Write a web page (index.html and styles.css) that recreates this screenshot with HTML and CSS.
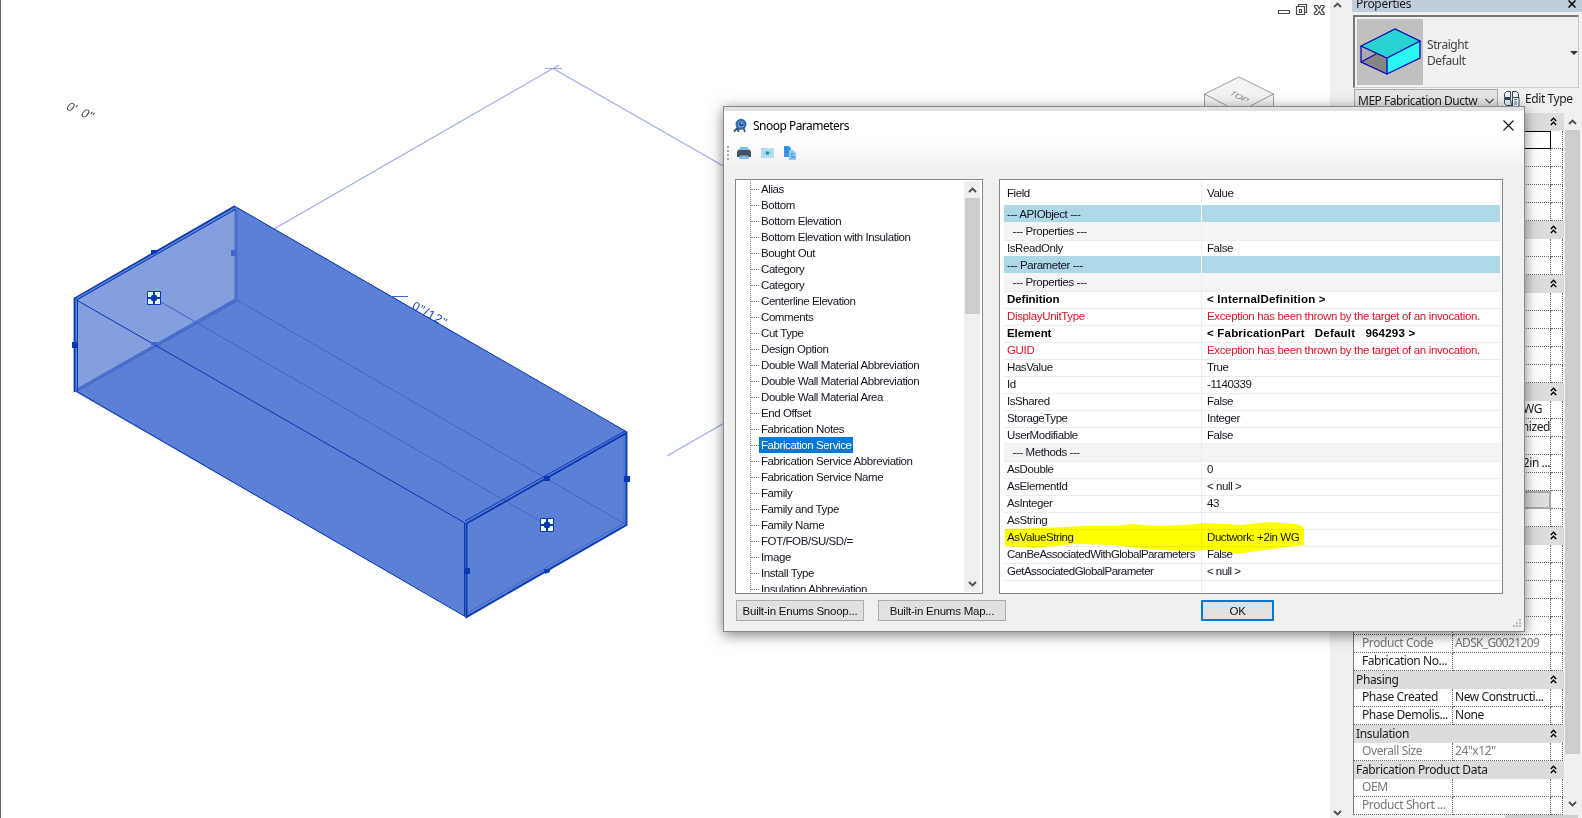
FILE: index.html
```html
<!DOCTYPE html>
<html lang="en">
<head>
<meta charset="utf-8">
<title>Snoop Parameters</title>
<link rel="stylesheet" href="styles.css">
</head>
<body>
<div class="app">
  <main class="view">
    <svg class="scene" width="1329" height="818" viewBox="0 0 1329 818">
      <g fill="none" stroke="#98aae6" stroke-width="1.1">
        <path d="M274 229L559 65M553 68.500L740 175.500M667 456L740 414M545 68.500h17"/>
      </g>
      <path fill="#5b80d6" d="M74 298L235 206L627 432V525L466 617L74 391Z"/>
      <path fill="#839fdf" d="M78 300L235 210V300L78 391Z"/>
      <g fill="none" stroke="#3f66ca" stroke-width="1">
        <path d="M237 300L625 524M154 298L547 525M78 391L237 301M236 209V300"/>
        <path d="M77 390L236 299.500" stroke="#4a70ce" stroke-width="3"/>
        <path d="M236 209V299" stroke="#4a70ce" stroke-width="3"/>
        <path d="M624 433V523L467 613" stroke="#426ac9"/>
      </g>
      <g fill="none" stroke="#0a39b0">
        <path d="M76.500 300L236 209M235 206.500L627 432M76.500 300L465 523M76 391L466 617M77.500 300V391M464.500 523V616M465 521L625 431" stroke-width="1"/>
        <path d="M74.500 392V298.500L235 206" stroke-width="1.8"/>
        <path d="M466.500 523.500L626.500 433V525L466.500 617Z" stroke-width="1.9"/>
      </g>
      <path d="M76 298.500L236 207.500" stroke="#5b80d6" stroke-width="1"/>
      <g fill="#0a39b8">
        <path d="M151 250h6v3l-6 2zM72 342h5v6h-5zM544 476h6v5h-6zM624 476h6v6h-6zM464 568h6v6h-6zM544 569h6v3l-5 2z"/>
        <path fill="#3f68cc" d="M231 250h5v6h-5zM151 342h6v3h-6z"/>
      </g>
      <g transform="translate(147 291)">
        <path fill="#eaffff" stroke="#0a39b0" d="M.5.5h13v13H.500z"/>
        <path d="M7 1v3M7 10v3M1 7h3M10 7h3" stroke="#0a39b0" stroke-width="2"/><path fill="#0a39b0" d="M4 5l1-1h4l1 1v4l-1 1H5L4 9z"/>
      </g>
      <g transform="translate(540 518)">
        <path fill="#eaffff" stroke="#0a39b0" d="M.5.5h13v13H.500z"/>
        <path d="M7 1v3M7 10v3M1 7h3M10 7h3" stroke="#0a39b0" stroke-width="2"/><path fill="#0a39b0" d="M4 5l1-1h4l1 1v4l-1 1H5L4 9z"/>
      </g>
      <path d="M390 296.500h18" stroke="#4068c8"/>
      <text class="slope-note" transform="translate(411 308.500) rotate(29)">0"/12"</text>
      <text class="dim-note" transform="translate(65 109) rotate(24) skewX(-12)">0'&#160;&#160;0"</text>
      <g stroke="#888" stroke-width=".8" fill="#f3f3f3">
        <path d="M1204.500 94L1239 77L1273.500 94V112L1239 128L1204.500 112Z"/>
        <path fill="none" d="M1204.500 94L1239 112L1273.500 94"/>
      </g>
      <text class="cube-label" transform="matrix(.85 .42 -.6 .48 1228.500 94)">TOP</text>
      <g fill="none" stroke="#4a4a4a" stroke-width="1.200">
        <path d="M1278.500 10.500h11v3h-11z"/>
        <path d="M1296.500 6.500h8v8h-8zM1298.500 6V4.500h8v8h-2M1299.500 9.500h2v3h-2z"/>
        <path d="M1314.500 5.500h3l1.800 3 1.800-3h3v1.500l-2.600 3 2.600 3v1.500h-3l-1.800-3-1.800 3h-3v-1.500l2.600-3-2.600-3z"/>
      </g>
    </svg>
  </main>
  <div class="view-scroll">
    <svg width="9" height="6" viewBox="0 0 9 6"><path class="chev" d="M1 5L4.500 1.500L8 5"/></svg>
    <svg width="9" height="6" viewBox="0 0 9 6"><path class="chev" d="M1 1L4.500 4.500L8 1"/></svg>
  </div>
  <aside class="props">
    <header class="props-title"><span>Properties</span>
      <svg width="8" height="8" viewBox="0 0 8 8"><path d="M.5.5l7 7M7.500.5l-7 7" stroke="#000" stroke-width="1.500"/></svg>
    </header>
    <section class="type-box">
      <svg width="66" height="66" viewBox="0 0 66 66">
        <path fill="#c0c0c0" d="M0 0h66v66H0z"/>
        <path fill="#858585" d="M4 27L30 39V55L4 43Z"/><path fill="#aaa" d="M4 27L19 35L4 43Z"/>
        <path fill="#2ad2d2" d="M4 27L38 10L63 22L30 39Z"/>
        <path fill="#2cf6f6" d="M30 39L63 22V39L30 55Z"/>
        <path fill="none" stroke="#0909b4" stroke-width="1.300" d="M4 27L38 10L63 22L30 39ZM4 27V43L30 55V39M30 55L63 39V22M4 43L19 35"/>
      </svg>
      <div class="type-name">Straight<br>Default</div>
      <i class="caret"></i>
    </section>
    <div class="type-bar">
      <div class="combo"><span>MEP Fabrication Ductw</span><svg width="9" height="6" viewBox="0 0 9 6"><path class="thin" d="M.5 1L4.500 5L8.500 1"/></svg></div>
      <svg width="16" height="16" viewBox="0 0 16 16"><g fill="none" stroke="#33485c"><path d="M6.500 6.500h-6v-4l2-2h4zM8.500.5h4l2 2v4h-6zM6.500 8.500h-6v4l2 2h5zM0 7.500h7"/><path fill="#fff" d="M8.500 6.500h6.500v9H8.500z"/><path d="M10 8.500h3M10 11h3M10 13h3" stroke="#4273b8"/></g></svg>
      <span class="edit-type">Edit Type</span>
    </div>
    <div class="grid-wrap">
      <div class="rows" id="rows"></div>
      <div class="grid-scroll">
        <svg width="9" height="6" viewBox="0 0 9 6"><path class="chev" d="M1 5L4.500 1.500L8 5"/></svg>
        <div class="grid-thumb"></div>
        <svg width="9" height="6" viewBox="0 0 9 6"><path class="chev" d="M1 1L4.500 4.500L8 1"/></svg>
      </div>
    </div>
    <div class="h-scroll"><i></i></div>
  </aside>
</div>

<div class="dialog">
  <header class="dlg-title">
    <svg width="15" height="16" viewBox="0 0 15 16"><path d="M5.500 9L1 13.500M6 10L5 14M10.500 10l1.500 4" stroke="#35506e" stroke-width="1.800"/><circle cx="8" cy="6.300" r="4.500" fill="#5f9fd8" stroke="#2e67a8" stroke-width="2"/><circle cx="8.300" cy="6" r="2.300" fill="#1d4f8f"/><circle cx="8.600" cy="5.300" r=".9" fill="#cfe6f8"/></svg>
    <span>Snoop Parameters</span>
    <svg class="x" width="11" height="11" viewBox="0 0 11 11"><path d="M.5.5l10 10M10.500.5l-10 10" stroke="#111" stroke-width="1.100"/></svg>
  </header>
  <div class="toolbar">
    <i class="grip"></i>
    <svg width="14" height="14" viewBox="0 0 14 14"><path fill="#47525e" d="M1.500 3.500h11L14 6v5H0V6z"/><path fill="#7dbcea" d="M3 1h8v3H3zM3 9.500h8l1 3.500H2z"/></svg>
    <svg width="13" height="12" viewBox="0 0 13 12"><path fill="#b4dff4" d="M0 1h13v10H0z"/><ellipse cx="6.500" cy="6" rx="4" ry="2.500" fill="#90d2ea"/><circle cx="6.500" cy="6" r="1.500" fill="#1a8ba0"/></svg>
    <svg width="13" height="14" viewBox="0 0 13 14"><path fill="#3b96e4" d="M0 0h5l2 2v9H0z"/><path fill="#8bc8f5" d="M5 4h4l3 3v7H5z"/><path d="M1 3h3M1 6h3M7 8h2M7 11h4" stroke="#2673c4"/></svg>
  </div>
  <div class="panes">
    <div class="tree">
      <ul id="tree"></ul>
      <div class="tree-scroll">
        <svg width="9" height="6" viewBox="0 0 9 6"><path class="chev" d="M1 5L4.500 1.500L8 5"/></svg>
        <div class="tree-thumb"></div>
        <svg width="9" height="6" viewBox="0 0 9 6"><path class="chev" d="M1 1L4.500 4.500L8 1"/></svg>
      </div>
    </div>
    <div class="list">
      <div class="list-head"><span>Field</span><span>Value</span></div>
      <div id="list"></div>
      <div class="list-rest"><span></span></div>
      <svg class="marker" width="304" height="38" viewBox="0 0 304 38"><path fill="#ff0" d="M0 9L50 7.500L80 6L110 6L128 4L150 6L180 5L200 3L235 5L265 2L290 4Q299 5 299 9V25L275 28L232 34L210 30L180 31L140 29L110 25L70 24L30 28L0 26Z"/></svg>
    </div>
  </div>
  <footer class="dlg-foot">
    <div class="btn b1"><span>Built-in Enums Snoop...</span></div>
    <div class="btn b2"><span>Built-in Enums Map...</span></div>
    <div class="btn ok"><span>OK</span></div>
  </footer>
  <svg class="resize" width="9" height="9" viewBox="0 0 9 9"><path fill="#bbb" d="M6 0h2v2H6zM3 3h2v2H3zM6 3h2v2H6zM0 6h2v2H0zM3 6h2v2H3zM6 6h2v2H6z"/></svg>
</div>
<script src="app.js"></script>
</body>
</html>
```
FILE: styles.css
```css
* { box-sizing: border-box; }
body { margin: 0; width: 1582px; height: 818px; overflow: hidden; background: #fff; }
svg { display: block; flex: none; }
.app { display: flex; height: 818px; font: 12px/18px "Noto Sans", "Open Sans", sans-serif; letter-spacing: -.42px; color: #1a1a1a; }
.view { width: 1330px; height: 818px; border-left: 1px solid #666; overflow: hidden; flex: none; }
.scene { margin-left: -1px; }
.slope-note { font: 12.500px "Liberation Sans", sans-serif; fill: #1644b4; letter-spacing: .9px; }
.dim-note { font: 12.500px "Liberation Sans", sans-serif; fill: #444; letter-spacing: 0; }
.cube-label { font: 10.500px "Liberation Sans", sans-serif; fill: #888; }
.chev { fill: none; stroke: #505050; stroke-width: 1.900; }
.thin { fill: none; stroke: #444; stroke-width: 1.100; }
.view-scroll { width: 17px; flex: none; background: #f0f0f0; display: flex; flex-direction: column; justify-content: space-between; padding: 2px 4px 2px 3px; }

.props { width: 235px; padding-left: 5px; background: #f0f0f0; display: flex; flex-direction: column; }
.props-title { height: 12px; background: #bfcddb; display: flex; justify-content: space-between; align-items: flex-start; padding: 0 6px 0 4px; line-height: 8px; letter-spacing: -.3px; }
.props-title span { display: block; }
.type-box { height: 73px; margin: 3px 3px 0 1px; border: 1px solid #ccc; border-top: 2px solid #777; border-left: 2px solid #777; display: flex; padding: 2px; }
.type-name { margin: 18px 0 0 4px; line-height: 16px; color: #444; }
.caret { margin: 32px -2px 0 auto; width: 0; height: 0; border: 4px solid transparent; border-top-color: #333; border-bottom: 0; }
.type-bar { height: 25px; display: flex; align-items: flex-start; padding: 1px 0 0 2px; }
.combo { width: 144px; height: 24px; border: 1px solid #aaa; background: #e4e4e4; display: flex; align-items: center; justify-content: space-between; padding: 0 3px 0 3px; }
.combo span { width: 122px; overflow: hidden; white-space: nowrap; letter-spacing: -.5px; }
.type-bar > svg { margin: 2px 5px 0 6px; }
.edit-type { line-height: 19px; white-space: nowrap; }
.grid-wrap { display: flex; height: 702px; margin-left: 1px; border-left: 1px solid #777; overflow: hidden; }
.rows { width: 210px; flex: none; }
.group { height: 18px; background: #dcdcdc; display: flex; justify-content: space-between; align-items: center; padding: 0 7px 1px 2px; letter-spacing: -.35px; }
.prow { height: 18px; display: grid; grid-template-columns: 99px 98px 12px; background: #fff; }
.prow > span { border-right: 1px dotted #666; border-bottom: 1px dotted #666; line-height: 16px; padding-left: 8px; white-space: nowrap; }
.prow > span + span { padding-left: 2px; }
.prow.right > span + span { text-align: right; }
.prow.service > span:nth-child(2) { text-align: right; padding-right: 8px; }
.prow.muted { color: #777; }
.prow.code > span + span { letter-spacing: -.65px; }
.prow.focus > span:nth-child(2) { border: 1px solid #000; }
.prow.button > span:nth-child(2) { background: #ddd; border: 2px solid #aaa; }
.grid-scroll { width: 15px; margin-left: 1px; background: #f0f0f0; display: flex; flex-direction: column; align-items: center; padding: 6px 0 8px; height: 702px; }
.grid-scroll svg { margin-right: 1px; }
.grid-thumb { width: 15px; height: 624px; margin: 5px 0 auto; background: #cdcdcd; }
.h-scroll { height: 3px; }
.h-scroll i { display: block; margin-left: 153px; width: 73px; height: 3px; background: #cdcdcd; }

.dialog { position: absolute; left: 723px; top: 106px; width: 802px; height: 526px; border: 1px solid #8a8a8a; background: #f0f0f0; box-shadow: 0 3px 13px rgba(0,0,0,.5); font: 11.500px/16px "Liberation Sans", Arial, sans-serif; letter-spacing: -.42px; color: #14141e; display: flex; flex-direction: column; }
.dlg-title { height: 34px; flex: none; border-top: 4px solid #e2e2e2; background: #fff; display: flex; align-items: center; padding: 0 10px 0 9px; font: 12px/18px "Noto Sans", "Open Sans", sans-serif; letter-spacing: -.52px; color: #000; }
.dlg-title span { margin-left: 5px; }
.dlg-title .x { margin: -2px 0 0 auto; }
.toolbar { height: 38px; flex: none; display: flex; align-items: center; padding: 0 0 14px 4px; background: linear-gradient(#fff, #f0f0f0 75%); }
.grip { width: 2px; height: 14px; margin-left: -1px; margin-right: -1px; background: repeating-linear-gradient(#aaa 0 2px, transparent 2px 4px); }
.toolbar svg { margin-left: 9px; }
.toolbar svg + svg { margin-left: 10px; }
.panes { display: flex; height: 415px; flex: none; padding-left: 11px; }
.tree { width: 248px; height: 415px; border: 1px solid #828790; background: #fff; display: flex; overflow: hidden; padding: 1px; }
.tree ul { margin: 0 0 0 13px; padding: 0; list-style: none; width: 214px; height: 411px; border-left: 1px dotted #888; overflow: hidden; flex: none; }
.tree li { height: 16px; display: flex; align-items: center; white-space: nowrap; }
.tree li::before { content: ""; width: 8px; border-top: 1px dotted #888; }
.tree li span { padding: 0 2px; line-height: 16px; }
.tree li.sel span { background: #0078d7; color: #fff; }
.tree-scroll { width: 16px; background: #f0f0f0; display: flex; flex-direction: column; align-items: center; padding: 6px 0 5px; height: 411px; }
.tree-thumb { width: 15px; height: 116px; margin: 5px 0 auto; background: #cdcdcd; }
.list { width: 504px; margin-left: 16px; height: 415px; border: 1px solid #828790; background: #fff; position: relative; overflow: hidden; padding-top: 1px; }
.list-head, .lrow, .list-rest { display: grid; grid-template-columns: 198px 299px; padding-left: 4px; }
.list-head { height: 24px; line-height: 24px; }
.lrow { height: 17px; }
.list-head span, .lrow span { padding-left: 3px; border-right: 1px solid #ececec; white-space: pre; }
.list-head span + span, .lrow span + span { padding-left: 5px; }
.lrow span { border-bottom: 1px solid #ececec; line-height: 18px; }
.lrow span + span { border-right-color: transparent; }
.lrow.cls span { background: #add8e6; border-bottom-color: #fff; border-right-color: #fff; }
.lrow.sub span { background: #f4f4f4; }
.lrow.err { color: #dc1428; letter-spacing: -.35px; }
.lrow.long { letter-spacing: -.55px; }
.lrow.obj { font-weight: 700; color: #000; letter-spacing: -.05px; }
.lrow.obj span + span { letter-spacing: .2px; }
.list-rest span { height: 20px; border-right: 1px solid #ececec; }
.marker { position: absolute; left: 5px; top: 340px; mix-blend-mode: multiply; }
.dlg-foot { display: flex; padding: 6px 0 0 12px; }
.btn { width: 128px; height: 21px; background: #e1e1e1; border: 1px solid #adadad; display: flex; align-items: center; justify-content: center; letter-spacing: -.23px; color: #111; }
.b2 { margin-left: 14px; }
.ok { width: 73px; margin-left: 195px; border: 2px solid #0078d7; }
.resize { position: absolute; right: 2px; bottom: 3px; }
```
FILE: app.js
```js
const tree = ["Alias","Bottom","Bottom Elevation","Bottom Elevation with Insulation","Bought Out","Category","Category","Centerline Elevation","Comments","Cut Type","Design Option","Double Wall Material Abbreviation","Double Wall Material Abbreviation","Double Wall Material Area","End Offset","Fabrication Notes","Fabrication Service","Fabrication Service Abbreviation","Fabrication Service Name","Family","Family and Type","Family Name","FOT/FOB/SU/SD/=","Image","Install Type","Insulation Abbreviation"];
const esc = s => s.replace(/</g, "&lt;");
document.getElementById("tree").innerHTML = tree.map(t =>
  `<li class="${t === "Fabrication Service" ? "sel" : ""}"><span>${t}</span></li>`).join("");

const list = [
  ["cls","--- APIObject ---",""],["sub","  --- Properties ---",""],["","IsReadOnly","False"],
  ["cls","--- Parameter ---",""],["sub","  --- Properties ---",""],
  ["obj","Definition","< InternalDefinition >"],
  ["err","DisplayUnitType","Exception has been thrown by the target of an invocation."],
  ["obj","Element","< FabricationPart   Default   964293 >"],
  ["err","GUID","Exception has been thrown by the target of an invocation."],
  ["","HasValue","True"],["","Id","-1140339"],["","IsShared","False"],["","StorageType","Integer"],["","UserModifiable","False"],
  ["sub","  --- Methods ---",""],["","AsDouble","0"],["","AsElementId","< null >"],["","AsInteger","43"],["","AsString",""],
  ["","AsValueString","Ductwork: +2in WG"],["long","CanBeAssociatedWithGlobalParameters","False"],["long","GetAssociatedGlobalParameter","< null >"]];
document.getElementById("list").innerHTML = list.map(([c, a, b]) =>
  `<div class="lrow ${c}"><span>${a}</span><span>${esc(b)}</span></div>`).join("");

const e = ["row","","",""];
const g = t => ["group", t];
const rows = [g(""),["focus","",""],e,e,e,e,g(""),e,e,g(""),e,e,e,e,e,g(""),
  ["service","","+2in WG"],["right","","Customized"],e,["right","","2in ..."],e,["button","",""],e,g(""),e,e,e,e,e,
  ["muted code","Product Code","ADSK_G0021209"],["","Fabrication No...",""],
  g("Phasing"),["","Phase Created","New Constructi..."],["","Phase Demolis...","None"],
  g("Insulation"),["muted","Overall Size",'24"x12"'],
  g("Fabrication Product Data"),["muted","OEM",""],["muted","Product Short ...",""]];
const fold = '<svg width="7" height="9" viewBox="0 0 7 9"><path fill="none" stroke="#000" stroke-width="1.3" d="M.8 4L3.5 1.200L6.200 4M.8 8L3.500 5.200L6.200 8"/></svg>';
document.getElementById("rows").innerHTML = rows.map(([c, a, b]) => c === "group"
  ? `<div class="group"><span>${a}</span>${fold}</div>`
  : `<div class="prow ${c}"><span>${a}</span><span>${b}</span><span></span></div>`).join("");
```
